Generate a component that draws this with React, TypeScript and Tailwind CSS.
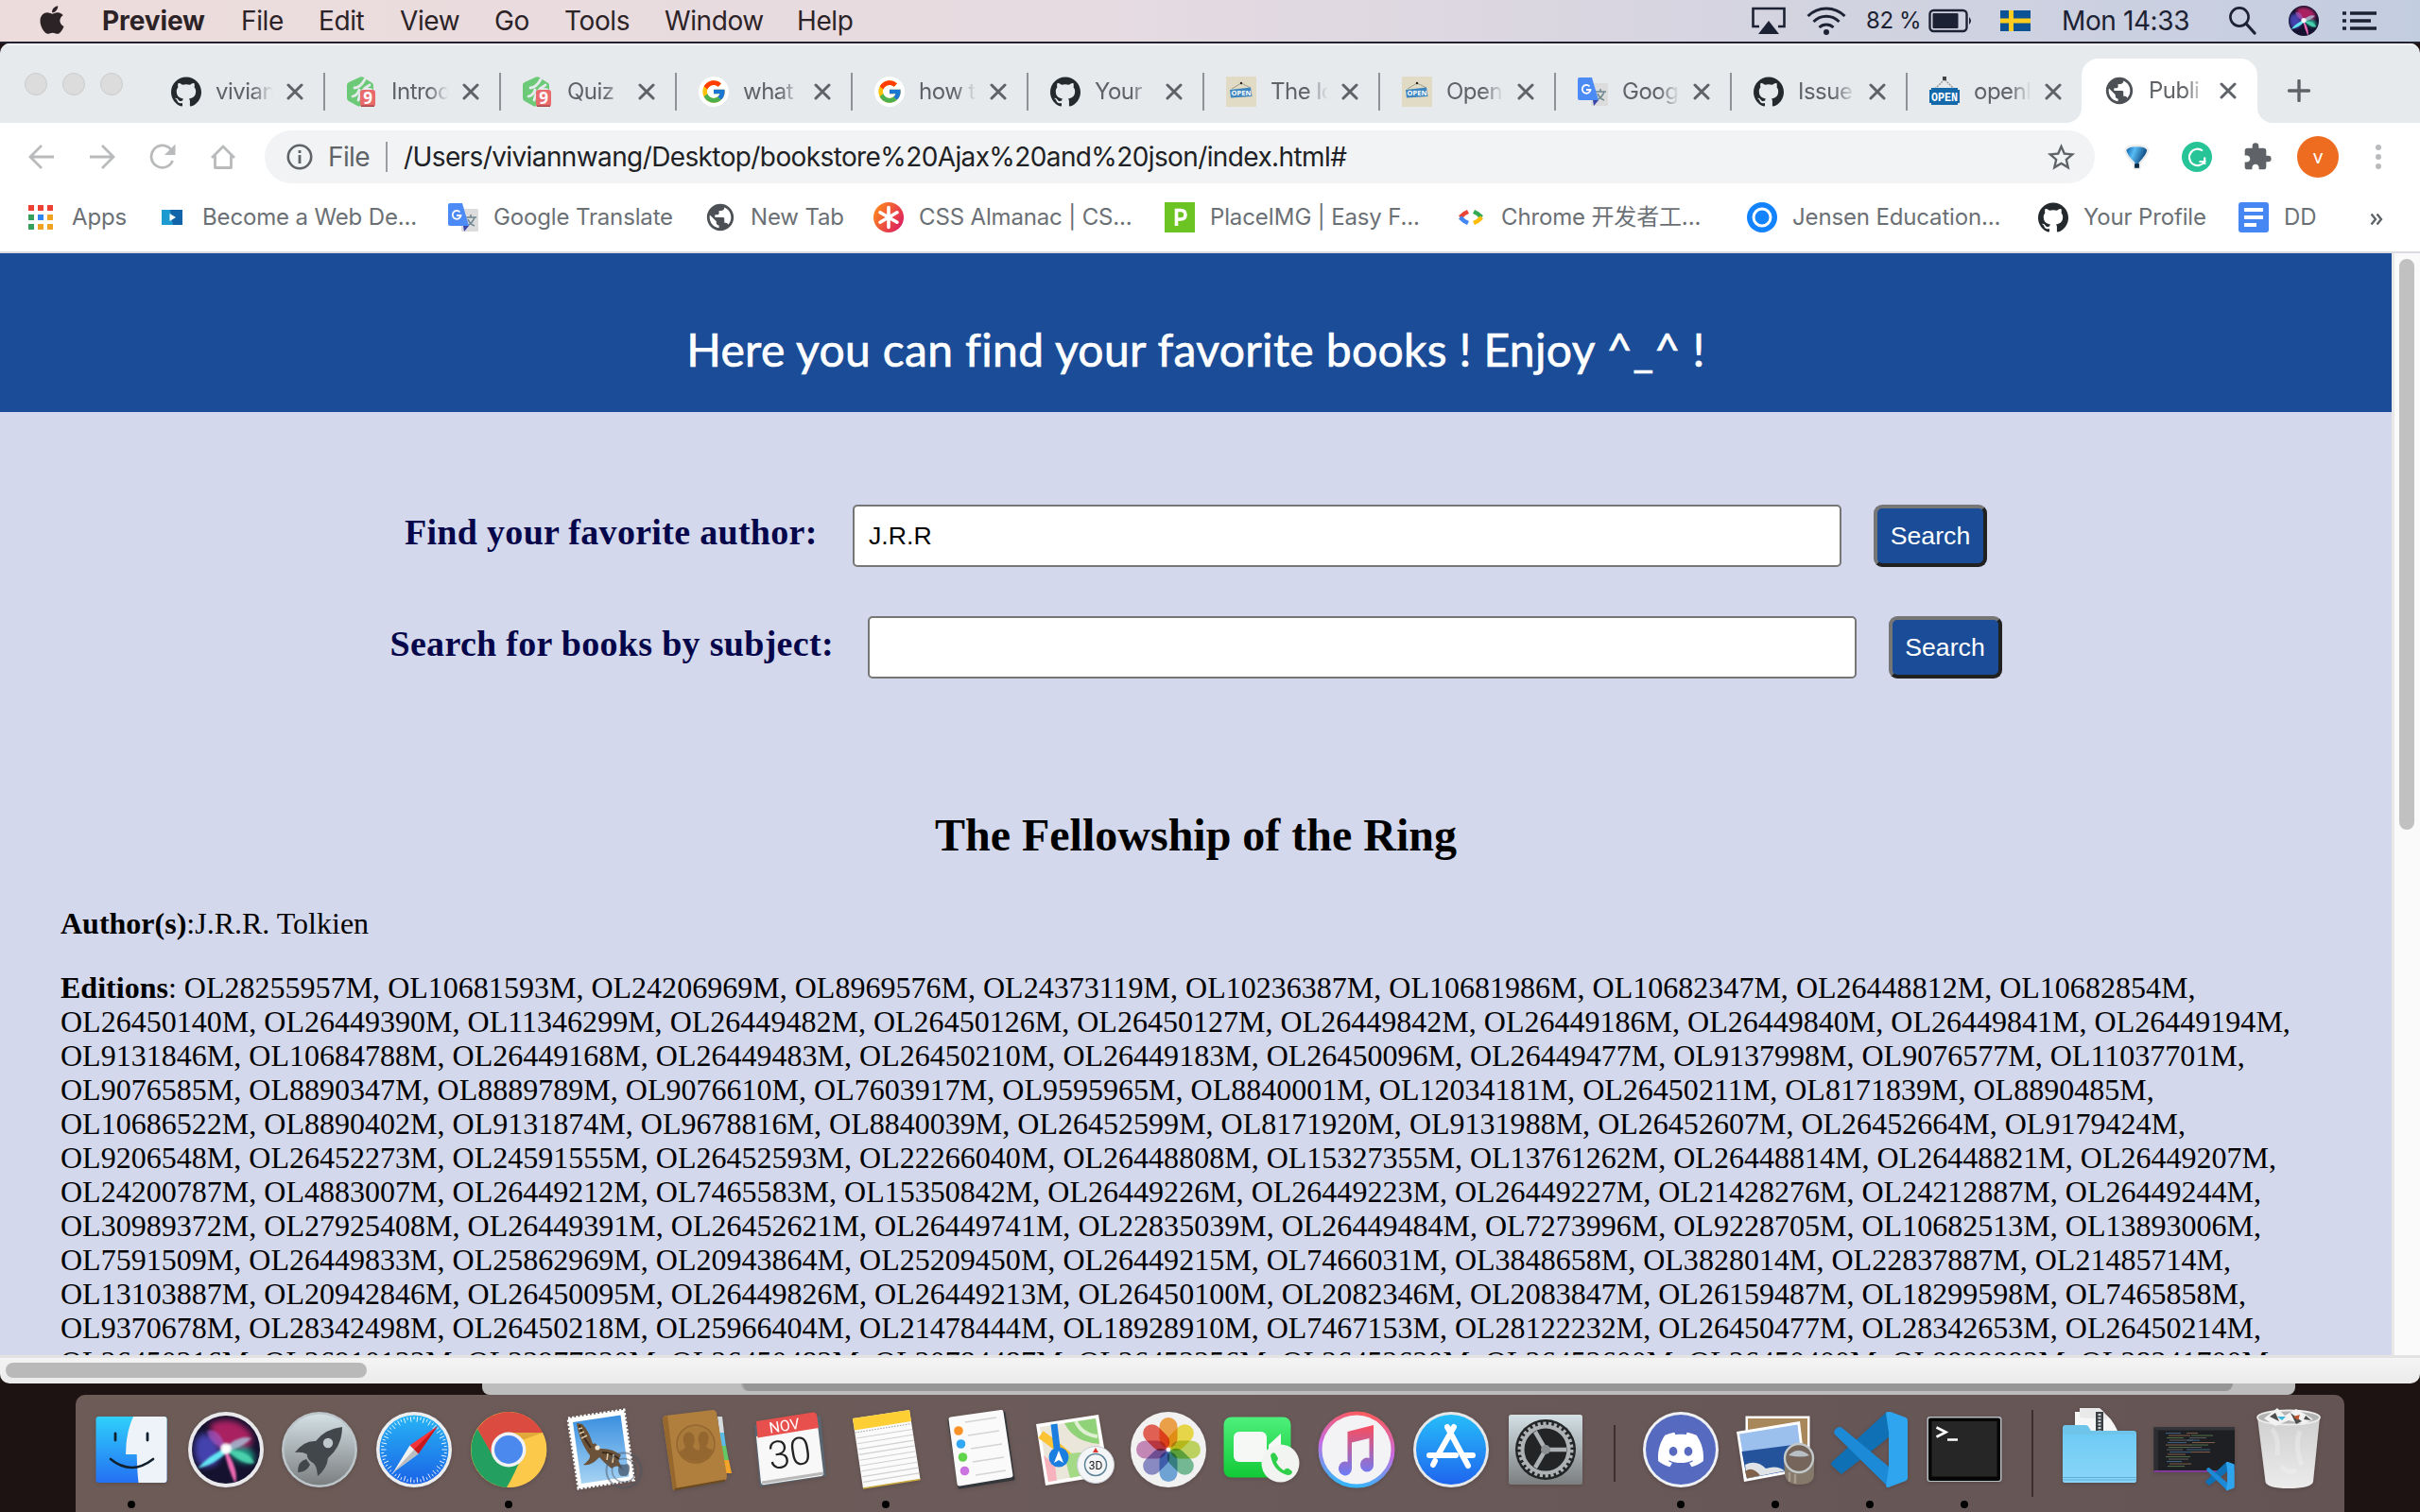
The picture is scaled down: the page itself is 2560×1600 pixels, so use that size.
import type { ReactNode } from "react";
import { FaApple } from "react-icons/fa";
import { FcGoogle } from "react-icons/fc";
import { MdExtension, MdPublic, MdStarBorder } from "react-icons/md";
import { SiDiscord, SiGithub } from "react-icons/si";

/* ---------- small favicons ---------- */

const Github = () => <SiGithub className="size-8 text-[#24292e]" />;

const Treehouse = () => (
  <svg viewBox="0 0 32 32" className="size-8">
    <path d="M14 0.5 Q17-0.5 19 2 L27 7 Q28 8 28 10 V22 Q28 24 26 25 L15 31 Q13 32 11 31 L2 26 Q0 25 0 23 V9 Q0 7 2 6 Z" fill="#6bc977" />
    <path d="M8 12 Q14 12 19 3 M6 21 Q11 20 13 14 M12 25 Q14 14 24 9 M17 16 Q21 12 26 14" stroke="#e6eaed" strokeWidth="2.8" fill="none" strokeLinecap="round" />
    <rect x="14" y="14" width="16" height="18" rx="3" fill="#e86a6c" />
    <rect x="15" y="30.5" width="14" height="1.5" fill="#a8484a" />
    <text x="22" y="29" fontSize="17" fontWeight="700" fill="#fff" textAnchor="middle" fontFamily="Open Sans, sans-serif">9</text>
  </svg>
);

const GoogleIcon = () => (
  <span className="flex size-8 items-center justify-center rounded-full bg-white">
    <FcGoogle className="size-[28px]" />
  </span>
);

const OpenBeige = () => (
  <svg viewBox="0 0 32 32" className="size-8">
    <rect width="32" height="32" fill="#e1dac4" />
    <path d="M6 13 L16 7 L26 12" stroke="#8f8c80" strokeWidth="0.8" fill="none" />
    <circle cx="16" cy="7" r="1.2" fill="#222" />
    <path d="M4 14 L26 11.5 L27.5 21 L5 22.5 Z" fill="#3f86bf" />
    <text x="16" y="20.3" fontSize="7.5" fontWeight="700" fill="#fff" textAnchor="middle" fontFamily="Open Sans, sans-serif">OPEN</text>
  </svg>
);

const OpenSign = () => (
  <svg viewBox="0 0 32 32" className="size-8">
    <path d="M6 13 L16 3 L26 13" stroke="#9b9b9b" strokeWidth="1.6" fill="none" strokeDasharray="2 1" />
    <rect x="14" y="0" width="4" height="4" fill="#444" />
    <path d="M0 14 h2 v-2 h28 v2 h2 v14 h-2 v2 h-28 v-2 h-2 Z" fill="#1469ab" />
    <text x="16" y="26" fontSize="13" fontWeight="700" fill="#fff" textAnchor="middle" textLength="28" lengthAdjust="spacingAndGlyphs" fontFamily="Liberation Mono, monospace">OPEN</text>
  </svg>
);

const Translate = () => (
  <svg viewBox="0 0 32 32" className="size-8">
    <rect x="14" y="7" width="18" height="24" rx="1.5" fill="#dcdcdc" />
    <path d="M18 16 h12 M24 13 v3 M20 25 Q26 22 28 16 M21 18 Q23 23 28 25" stroke="#6f8790" strokeWidth="1.6" fill="none" />
    <path d="M16 25 h6 l-5 6 Z" fill="#3746a8" />
    <path d="M2 1 h13 l7 24 H2 q-2 0-2-2 V3 q0-2 2-2 Z" fill="#4c8bf5" />
    <path d="M12.5 10.5 a4.4 4.4 0 1 0 1 3.5 h-4.5" stroke="#fff" strokeWidth="1.8" fill="none" />
  </svg>
);

const Globe = () => (
  <span className="flex size-8 items-center justify-center">
    <MdPublic className="size-[34px] shrink-0 text-[#4d5156]" />
  </span>
);

/* ---------- tabs ---------- */

const TABS: { title: string; icon: ReactNode }[] = [
  { title: "vivian", icon: <Github /> },
  { title: "Introd", icon: <Treehouse /> },
  { title: "Quiz", icon: <Treehouse /> },
  { title: "what", icon: <GoogleIcon /> },
  { title: "how t", icon: <GoogleIcon /> },
  { title: "Your", icon: <Github /> },
  { title: "The lo", icon: <OpenBeige /> },
  { title: "Open", icon: <OpenBeige /> },
  { title: "Goog", icon: <Translate /> },
  { title: "Issue", icon: <Github /> },
  { title: "openl", icon: <OpenSign /> },
];

const CloseX = () => (
  <svg viewBox="0 0 18 18" className="size-[18px] shrink-0">
    <path d="M2 2 L16 16 M16 2 L2 16" stroke="#5f6368" strokeWidth="3" strokeLinecap="round" />
  </svg>
);

const TabBody = ({ title, icon }: { title: string; icon: ReactNode }) => (
  <>
    <span className="shrink-0">{icon}</span>
    <span className="ml-[15px] w-[62px] overflow-hidden text-[24px] leading-8 tracking-[-0.5px] whitespace-nowrap text-[#5f6368] [mask-image:linear-gradient(to_right,black_62%,transparent_98%)]">
      {title}
    </span>
    <span className="ml-[13px] flex">
      <CloseX />
    </span>
  </>
);

const TabStrip = () => (
  <div className="flex h-[84px] border-t-2 border-[#f4f6f7] bg-[#e6eaed]">
    <div className="mt-[29px] ml-[26px] flex w-[132px] gap-4">
      {[0, 1, 2].map((i) => (
        <span key={i} className="size-6 rounded-full border border-[#cbcbcb] bg-[#dcdcdc]" />
      ))}
    </div>
    {TABS.map((t, i) => (
      <div key={i} className="mt-[29px] flex h-10 w-[186px] items-center">
        <div className={`flex h-full w-full items-center pl-[23px] ${i < 10 ? "border-r-2 border-[#8f9397]" : ""}`}>
          <TabBody {...t} />
        </div>
      </div>
    ))}
    <div className="relative -ml-[2px] mt-[14px] flex h-[68px] w-[186px] items-center rounded-t-[18px] bg-white pl-[24px]">
      <svg viewBox="0 0 16 16" className="absolute bottom-0 -left-4 size-4">
        <path d="M16 0 A16 16 0 0 1 0 16 H16 Z" fill="#fff" />
      </svg>
      <TabBody title="Publi" icon={<Globe />} />
      <svg viewBox="0 0 16 16" className="absolute -right-4 bottom-0 size-4">
        <path d="M0 0 A16 16 0 0 0 16 16 H0 Z" fill="#fff" />
      </svg>
    </div>
    <svg viewBox="0 0 24 24" className="mt-[36px] ml-[32px] size-6">
      <path d="M12 1.5 V22.5 M1.5 12 H22.5" stroke="#5f6368" strokeWidth="3.4" strokeLinecap="round" />
    </svg>
  </div>
);

/* ---------- menu bar ---------- */

const MENUS: [string, string][] = [
  ["File", "w-[82px]"],
  ["Edit", "w-[86px]"],
  ["View", "w-[100px]"],
  ["Go", "w-[74px]"],
  ["Tools", "w-[106px]"],
  ["Window", "w-[140px]"],
  ["Help", "w-[80px]"],
];

const SiriArt = () => (
  <>
    <defs>
      <clipPath id="orb">
        <circle cx="50" cy="44" r="36" />
      </clipPath>
    </defs>
    <circle cx="50" cy="44" r="36" fill="#15122f" />
    <g clipPath="url(#orb)">
      <g className="blur-[3px]">
        <path d="M34 16 Q60 6 76 26 Q82 40 70 42 L50 44 Q32 34 34 16" fill="#c4246a" opacity="0.85" />
        <path d="M18 34 Q30 16 44 44 Q46 64 24 62 Q14 52 18 34" fill="#4c4bc4" opacity="0.85" />
        <path d="M50 44 Q80 34 80 56 Q66 64 50 44" fill="#1f9d86" />
      </g>
      <g className="blur-[1px]">
        <path d="M50 44 Q74 44 80 58 Q70 62 50 44" fill="#4fd6b0" opacity="0.9" />
        <path d="M48 44 Q52 64 60 80 Q64 66 50 44" fill="#f06ab4" />
        <path d="M50 42 Q32 50 20 64 Q38 60 52 46" fill="#62e6f2" />
        <path d="M50 44 Q44 20 30 24 Q32 38 50 44" fill="#a65fd0" opacity="0.6" />
        <path d="M49 42 Q64 28 77 32 Q68 42 50 46" fill="#a9d8ea" opacity="0.7" />
        <circle cx="50" cy="43" r="6" fill="#fff" opacity="0.9" />
      </g>
    </g>
    <circle cx="50" cy="43" r="3" fill="#fff" />
  </>
);

const MenuBar = () => (
  <div className="flex h-[44px] items-center bg-linear-to-r from-[#ecdcdc] from-5% via-[#e6dbe1] via-45% to-[#c3cde0] text-[28px] tracking-[-0.4px] text-[#2c2327]">
    <FaApple className="mb-[3px] ml-[38px] size-[34px]" />
    <span className="ml-[36px] w-[147px] font-bold tracking-[-0.1px]">Preview</span>
    {MENUS.map(([m, w]) => (
      <span key={m} className={w}>
        {m}
      </span>
    ))}
    <div className="ml-auto flex items-center text-[#1c2233]">
      <svg viewBox="0 0 38 32" className="h-8 w-[38px]">
        <path d="M9 22 H2.5 V3 H35.5 V22 H29" stroke="#1c2233" strokeWidth="2.6" fill="none" />
        <path d="M19 16 L30 30 H8 Z" fill="#1c2233" />
      </svg>
      <svg viewBox="0 0 42 32" className="ml-[21px] h-8 w-[42px]">
        <path d="M1.5 11 A27.5 27.5 0 0 1 40.5 11 M7.5 17 A19 19 0 0 1 34.5 17 M13.5 23 A11 11 0 0 1 28.5 23" stroke="#1c2233" strokeWidth="3" fill="none" />
        <circle cx="21" cy="28" r="3" fill="#1c2233" />
      </svg>
      <span className="ml-[21px] w-[66px] text-[24px] tracking-[-0.4px] whitespace-nowrap">82 %</span>
      <svg viewBox="0 0 48 26" className="h-[26px] w-12">
        <rect x="1.5" y="2" width="39" height="22" rx="4" stroke="#1c2233" strokeWidth="2.4" fill="none" />
        <rect x="4.5" y="5" width="27" height="16" rx="1" fill="#1c2233" />
        <path d="M43 9 Q47 13 43 17 Z" fill="#1c2233" />
      </svg>
      <svg viewBox="0 0 32 22" className="ml-[28px] h-[22px] w-8">
        <rect width="32" height="22" fill="#0b5394" />
        <path d="M11.5 0 V22 M0 11 H32" stroke="#ffcd1f" strokeWidth="5" />
      </svg>
      <span className="ml-[33px] w-[176px] whitespace-nowrap">Mon 14:33</span>
      <svg viewBox="0 0 30 30" className="size-[30px]">
        <circle cx="12" cy="11" r="9.6" stroke="#1c2233" strokeWidth="2.6" fill="none" />
        <path d="M19 18 L28 28" stroke="#1c2233" strokeWidth="3.2" strokeLinecap="round" />
      </svg>
      <svg viewBox="14 8 72 72" className="ml-[34px] size-8">
        <SiriArt />
      </svg>
      <svg viewBox="0 0 38 22" className="mr-[45px] ml-[24px] h-[22px] w-[38px]">
        <path d="M1 3 H5 M1 11 H5 M1 19 H5 M9 3 H37 M9 11 H31 M9 19 H37" stroke="#1c2233" strokeWidth="3.6" />
      </svg>
    </div>
  </div>
);

/* ---------- toolbar ---------- */

const Toolbar = () => (
  <div className="flex h-[72px] items-center bg-white">
    <svg viewBox="0 0 28 28" className="ml-[30px] size-7">
      <path d="M27 14 H3 M14 2 L2 14 L14 26" stroke="#b9babc" strokeWidth="2.8" fill="none" />
    </svg>
    <svg viewBox="0 0 28 28" className="ml-[36px] size-7">
      <path d="M1 14 H25 M14 2 L26 14 L14 26" stroke="#b9babc" strokeWidth="2.8" fill="none" />
    </svg>
    <svg viewBox="0 0 28 28" className="ml-[36px] size-7">
      <path d="M22.6 6 A11.7 11.7 0 1 0 24.6 18" stroke="#b9babc" strokeWidth="2.8" fill="none" />
      <path d="M27.5 0.5 V12 H16 Z" fill="#b9babc" />
    </svg>
    <svg viewBox="0 0 28 28" className="ml-[36px] size-7">
      <path d="M2 15 L14 3 L26 15 M5.5 12 V25.5 H22.5 V12" stroke="#b9babc" strokeWidth="2.8" fill="none" strokeLinejoin="round" />
    </svg>
    <div className="ml-[30px] flex h-[56px] w-[1936px] items-center rounded-full bg-[#f1f3f4]">
      <svg viewBox="0 0 28 28" className="ml-[23px] size-7">
        <circle cx="14" cy="14" r="12.2" stroke="#5f6368" strokeWidth="2.6" fill="none" />
        <path d="M14 12 V21 M14 7 V10" stroke="#5f6368" strokeWidth="2.8" />
      </svg>
      <span className="ml-[16px] w-[61px] text-[28px] tracking-[-0.6px] text-[#5f6368]">File</span>
      <span className="h-8 w-[2px] bg-[#9a9da1]" />
      <span className="ml-[17px] text-[28px] tracking-[-0.61px] whitespace-nowrap text-[#202124]">
        /Users/viviannwang/Desktop/bookstore%20Ajax%20and%20json/index.html#
      </span>
      <MdStarBorder className="mr-[18px] ml-auto size-[35px] text-[#5f6368]" />
    </div>
    <svg viewBox="0 0 30 32" className="ml-[29px] size-[31px]">
      <defs>
        <linearGradient id="balloon" x1="0" x2="1" y1="0" y2="0.4">
          <stop offset="0" stopColor="#0a5ca6" />
          <stop offset="0.4" stopColor="#58bdf5" />
          <stop offset="1" stopColor="#053a72" />
        </linearGradient>
      </defs>
      <path d="M3.500 8 Q6 4.500 15 4.500 Q24 4.500 26 8 Q26 12 17 22 V27 H13 V22 Q4 13 3.500 8" fill="#fff" stroke="#ececec" strokeWidth="5" strokeLinejoin="round" />
      <path d="M3.500 8 Q6 4.500 15 4.500 Q24 4.500 26 8 Q26 12 17 22 V27 H13 V22 Q4 13 3.500 8" fill="url(#balloon)" />
      <path d="M12.500 23 h5 v4.500 h-5 Z" fill="#0c2945" />
    </svg>
    <svg viewBox="0 0 32 32" className="ml-[32px] size-8">
      <circle cx="16" cy="16" r="16" fill="#27c498" />
      <path d="M22 9.5 A8.7 8.7 0 1 0 24 21 H18.5 M24.2 16.5 V24" stroke="#fff" strokeWidth="2.2" fill="none" />
    </svg>
    <MdExtension className="ml-[32px] size-[32px] text-[#5f6368]" />
    <span className="ml-[26px] flex size-[44px] items-center justify-center rounded-full bg-[#ee6c1f] text-[20px] text-white">v</span>
    <span className="ml-[39px] flex flex-col gap-1">
      {[0, 1, 2].map((i) => (
        <span key={i} className="size-[6px] rounded-full bg-[#b9babc]" />
      ))}
    </span>
  </div>
);

/* ---------- bookmarks ---------- */

const APP_DOTS = ["#ee3f35", "#ee3f35", "#ee3f35", "#34a05a", "#2f86f0", "#f0a323", "#34a05a", "#f0a323", "#f0a323"];

const BOOKMARKS: { label: string; cell: string; icon: ReactNode }[] = [
  {
    label: "Apps",
    cell: "w-[138px]",
    icon: (
      <svg viewBox="0 0 32 32" className="size-8">
        {APP_DOTS.map((c, i) => (
          <rect key={i} x={2 + (i % 3) * 10} y={3 + Math.floor(i / 3) * 10} width="6" height="6" fill={c} />
        ))}
      </svg>
    ),
  },
  {
    label: "Become a Web De...",
    cell: "w-[308px]",
    icon: (
      <svg viewBox="0 0 32 32" className="size-8">
        <rect x="5" y="8" width="22" height="16" fill="#1d9ad0" />
        <path d="M14 8 H27 V24 H17 Z" fill="#1263a8" />
        <path d="M13.5 12 L20 16 L13.5 20 Z" fill="#fff" />
      </svg>
    ),
  },
  { label: "Google Translate", cell: "w-[272px]", icon: <Translate /> },
  { label: "New Tab", cell: "w-[178px]", icon: <Globe /> },
  {
    label: "CSS Almanac | CS...",
    cell: "w-[308px]",
    icon: (
      <svg viewBox="0 0 32 32" className="size-8">
        <defs>
          <linearGradient id="csst" x1="0" x2="1" y1="0.2" y2="0.8">
            <stop offset="0" stopColor="#ff8a1c" />
            <stop offset="1" stopColor="#da1b63" />
          </linearGradient>
        </defs>
        <circle cx="16" cy="16" r="16" fill="url(#csst)" />
        <path d="M16 5.5 V26.5 M7 10.8 L25 21.2 M25 10.8 L7 21.2" stroke="#fff" strokeWidth="3.6" strokeLinecap="round" />
      </svg>
    ),
  },
  {
    label: "PlaceIMG | Easy F...",
    cell: "w-[308px]",
    icon: (
      <svg viewBox="0 0 32 32" className="size-8">
        <rect width="32" height="32" fill="#6cc424" />
        <path d="M12.5 25 V8.5 H17 Q22 8.5 22 13.3 Q22 18 17 18 H12.5" stroke="#fff" strokeWidth="3.6" fill="none" />
      </svg>
    ),
  },
  {
    label: "Chrome 开发者工...",
    cell: "w-[308px]",
    icon: (
      <svg viewBox="0 0 32 32" className="size-8" strokeWidth="4.4" fill="none">
        <path d="M13 10 L9 12 L4.5 16" stroke="#ea4335" />
        <path d="M4.5 16 L9 20 L13 22" stroke="#4285f4" />
        <path d="M19 10 L23 12 L27.5 16" stroke="#34a853" />
        <path d="M27.5 16 L23 20 L19 22" stroke="#fbbc05" />
      </svg>
    ),
  },
  {
    label: "Jensen Education...",
    cell: "w-[308px]",
    icon: (
      <svg viewBox="0 0 32 32" className="size-8">
        <circle cx="16" cy="16" r="16" fill="#1483ff" />
        <circle cx="16" cy="16" r="9" stroke="#fff" strokeWidth="3" fill="none" />
      </svg>
    ),
  },
  { label: "Your Profile", cell: "w-[212px]", icon: <Github /> },
  {
    label: "DD",
    cell: "w-[129px]",
    icon: (
      <svg viewBox="0 0 32 32" className="size-8">
        <rect width="32" height="32" rx="3" fill="#4787f3" />
        <path d="M6 8 H26 M6 16 H26 M6 24 H19" stroke="#fff" strokeWidth="4" />
      </svg>
    ),
  },
];

const Bookmarks = () => (
  <div className="flex h-[66px] items-center border-b-2 border-[#d9dbe0] bg-white pb-2 pl-[28px]">
    {BOOKMARKS.map((b) => (
      <div key={b.label} className={`flex shrink-0 items-center gap-4 ${b.cell}`}>
        {b.icon}
        <span className="font-[Inter,'Noto_Sans_CJK_SC',sans-serif] text-[24px] leading-8 tracking-[-0.15px] whitespace-nowrap text-[#6b7075]">{b.label}</span>
      </div>
    ))}
    <svg viewBox="0 0 14 14" className="mt-1 ml-[10px] size-[14px]">
      <path d="M1.5 1.5 L6 7 L1.5 12.5 M7.5 1.5 L12 7 L7.5 12.5" stroke="#5f6368" strokeWidth="2.4" fill="none" />
    </svg>
  </div>
);

/* ---------- web page ---------- */

const EDITIONS = [
  "OL28255957M, OL10681593M, OL24206969M, OL8969576M, OL24373119M, OL10236387M, OL10681986M, OL10682347M, OL26448812M, OL10682854M,",
  "OL26450140M, OL26449390M, OL11346299M, OL26449482M, OL26450126M, OL26450127M, OL26449842M, OL26449186M, OL26449840M, OL26449841M, OL26449194M,",
  "OL9131846M, OL10684788M, OL26449168M, OL26449483M, OL26450210M, OL26449183M, OL26450096M, OL26449477M, OL9137998M, OL9076577M, OL11037701M,",
  "OL9076585M, OL8890347M, OL8889789M, OL9076610M, OL7603917M, OL9595965M, OL8840001M, OL12034181M, OL26450211M, OL8171839M, OL8890485M,",
  "OL10686522M, OL8890402M, OL9131874M, OL9678816M, OL8840039M, OL26452599M, OL8171920M, OL9131988M, OL26452607M, OL26452664M, OL9179424M,",
  "OL9206548M, OL26452273M, OL24591555M, OL26452593M, OL22266040M, OL26448808M, OL15327355M, OL13761262M, OL26448814M, OL26448821M, OL26449207M,",
  "OL24200787M, OL4883007M, OL26449212M, OL7465583M, OL15350842M, OL26449226M, OL26449223M, OL26449227M, OL21428276M, OL24212887M, OL26449244M,",
  "OL30989372M, OL27925408M, OL26449391M, OL26452621M, OL26449741M, OL22835039M, OL26449484M, OL7273996M, OL9228705M, OL10682513M, OL13893006M,",
  "OL7591509M, OL26449833M, OL25862969M, OL20943864M, OL25209450M, OL26449215M, OL7466031M, OL3848658M, OL3828014M, OL22837887M, OL21485714M,",
  "OL13103887M, OL20942846M, OL26450095M, OL26449826M, OL26449213M, OL26450100M, OL2082346M, OL2083847M, OL26159487M, OL18299598M, OL7465858M,",
  "OL9370678M, OL28342498M, OL26450218M, OL25966404M, OL21478444M, OL18928910M, OL7467153M, OL28122232M, OL26450477M, OL28342653M, OL26450214M,",
  "OL26450216M, OL26910122M, OL23977320M, OL26450482M, OL20784487M, OL26452256M, OL26452620M, OL26452600M, OL26450400M, OL9999992M, OL28341700M,",
];

const SearchRow = ({ label, cell, value, top }: { label: string; cell: string; value: string; top: string }) => (
  <div className={`flex h-[66px] justify-center ${top}`}>
    <label className={`pr-[38px] text-right font-[Liberation_Serif,serif] text-[38px] leading-[59px] font-bold tracking-[0.3px] whitespace-nowrap text-[#06064a] ${cell}`}>
      {label}
    </label>
    <input
      readOnly
      value={value}
      className="h-[66px] w-[1046px] rounded-[5px] border-2 border-[#767676] bg-white px-[15px] font-[Liberation_Sans,Arial,sans-serif] text-[26.67px] text-black"
    />
    <button className="ml-[34px] h-[66px] w-[120px] rounded-[9px] border-4 border-t-[#767676] border-r-[#212121] border-b-[#212121] border-l-[#767676] bg-[#1a4c97] font-[Liberation_Sans,Arial,sans-serif] text-[26.67px] text-white">
      Search
    </button>
  </div>
);

const WebPage = () => (
  <div className="flex h-[1166px]">
    <div className="h-full w-[2530px] overflow-hidden bg-[#d4d8ec] text-black">
      <header className="flex h-[168px] justify-center bg-[#1a4c97] pt-[72px]">
        <h1 className="font-[Lato,sans-serif] text-[48px] leading-[60px] tracking-[0.35px] whitespace-nowrap text-white [-webkit-text-stroke:0.7px_white]">
          Here you can find your favorite books ! Enjoy ^_^ !
        </h1>
      </header>
      <SearchRow label="Find your favorite author:" cell="w-[474px]" value="J.R.R" top="mt-[98px]" />
      <SearchRow label="Search for books by subject:" cell="w-[505px]" value="" top="mt-[52px]" />
      <div className="font-[Liberation_Serif,serif]">
        <h2 className="mt-[138px] text-center text-[48px] leading-[56px] font-bold">The Fellowship of the Ring</h2>
        <p className="mt-[47px] ml-16 text-[32px] leading-9">
          <b>Author(s)</b>:J.R.R. Tolkien
        </p>
        <div className="mt-8 ml-16 text-[32px] leading-9 tracking-[0.013px] whitespace-nowrap">
          {EDITIONS.map((line, i) => (
            <p key={i}>
              {i === 0 && (
                <>
                  <b>Editions</b>:{" "}
                </>
              )}
              {line}
            </p>
          ))}
        </div>
      </div>
    </div>
    <div className="flex-1 border-l-[3px] border-[#e8e8e8] bg-[#fafafa] pt-[6px] pl-[5px]">
      <div className="h-[604px] w-4 rounded-full bg-[#c1c1c1]" />
    </div>
  </div>
);

/* ---------- dock ---------- */

const VSCodeArt = () => (
  <>
    <path d="M68 4 L90 12 L64 36 L20 70 L10 61 Q8 59 10 57 Z" fill="#1070b5" />
    <path d="M13 28 Q11 25 14 22 Q18 18 22 22 L70 62 V84 Z" fill="#1c8ad6" />
    <path d="M70 4 Q68 4 67 5 L70 26 V62 L67 83 Q69 85 72 83 L88 77 Q90 76 90 74 V13 Q90 11 88 10 L72 4 Z" fill="#2ea5ee" />
  </>
);

const polar = (r: number, deg: number) => {
  const a = (deg * Math.PI) / 180;
  return [50 + r * Math.cos(a), 44 + r * Math.sin(a)];
};

const PETALS = ["#f79a2e", "#f2dc2e", "#bfd94a", "#63b98a", "#5b9fdc", "#7d7fc4", "#c77bb6", "#ec4a3c"];

type DockItem = { name: string; running?: boolean; art: ReactNode };

const APPS: DockItem[] = [
  {
    name: "Finder",
    running: true,
    art: (
      <>
        <rect x="12.500" y="9" width="75" height="70" rx="3" fill="url(#finder)" />
        <path d="M52 9 H84.500 Q87.500 9 87.500 12 V76 Q87.500 79 84.500 79 H57.500 Q56 66 55.700 49 H44 Q44 26 52 9" fill="#eef2f9" />
        <path d="M33 27 V34 M67 27 V34" stroke="#10202e" strokeWidth="2.8" strokeLinecap="round" />
        <path d="M28 54 Q50 72 73 54" stroke="#10202e" strokeWidth="2.600" fill="none" strokeLinecap="round" />
      </>
    ),
  },
  {
    name: "Siri",
    art: (
      <>
        <circle cx="50" cy="44" r="40" fill="#e9e9ec" />
        <SiriArt />
      </>
    ),
  },
  {
    name: "Launchpad",
    art: (
      <>
        <circle cx="50" cy="44" r="40" fill="#bcc6ca" />
        <circle cx="50" cy="44" r="37.500" fill="url(#silver)" />
        <path d="M74 20 Q56 22 46 35 Q34 34 24 47 Q32 46 37 49 Q36 54 43 58 Q47 60 48 72 Q58 64 59 53 Q74 40 74 20" fill="#42474b" />
        <path d="M36 54 Q27 56 27 68 Q36 68 40 60 Z" fill="#42474b" />
        <circle cx="59" cy="37" r="5.200" fill="#bfc9cd" />
      </>
    ),
  },
  {
    name: "Safari",
    art: (
      <>
        <circle cx="50" cy="44" r="40" fill="#eceef0" />
        <circle cx="50" cy="44" r="36.500" fill="url(#safari)" />
        {Array.from({ length: 60 }, (_, i) => {
          const [x1, y1] = polar(i % 2 ? 32 : 29.5, i * 6);
          const [x2, y2] = polar(35, i * 6);
          return <line key={i} x1={x1} y1={y1} x2={x2} y2={y2} stroke="#fff" strokeWidth="0.900" />;
        })}
        <path d="M75 19 L54.500 48.500 L45.500 39.500 Z" fill="#f2343a" />
        <path d="M28 68 L54.500 48.500 L45.500 39.500 Z" fill="#f2f2f2" />
        <path d="M75 19 L54.500 48.500 L50 44 Z" fill="#c8161d" />
        <path d="M28 68 L54.500 48.500 L50 44 Z" fill="#b9bdc0" />
      </>
    ),
  },
  {
    name: "Chrome",
    running: true,
    art: (
      <>
        <circle cx="50" cy="44" r="40" fill="#fdc94a" />
        <path d="M17 22 A40 40 0 0 1 86 26 H50 L33 52 Z" fill="#dc4b40" />
        <path d="M17 22 L34.500 53 L50 62 L62 56 L49 84 A40 40 0 0 1 17 22" fill="#23a060" />
        <path d="M86 26 A40 40 0 0 1 48 84 L65.500 53 L60 30 Z" fill="#fdc94a" />
        <path d="M50 26 H86 L64 34 Z" fill="#e0a93a" />
        <circle cx="50" cy="44" r="18.500" fill="#f2f2f2" />
        <circle cx="50" cy="44" r="15" fill="#4b89ee" />
      </>
    ),
  },
  {
    name: "Mail",
    art: (
      <>
        <path d="M14 11 L73 2 L83.500 76 L25 85 Z" fill="#fff" stroke="#fff" strokeWidth="3" strokeDasharray="2.400 1.800" />
        <path d="M19 15 L69.500 7.500 L78.500 72.500 L28 80 Z" fill="url(#sky)" />
        <path d="M23 16 L29 17 Q36 24 40 38 Q43 36 45 40 L48 43 Q60 42 70 50 L67 55 L72 66 Q66 58 60 64 Q52 58 47 52 Q38 62 30 60 Q38 54 37 50 Q26 36 23 16" fill="#6b5238" />
        <path d="M26 18 Q30 32 38 42 M50 47 Q60 47 68 54" stroke="#3b2a1c" strokeWidth="2" fill="none" />
        <path d="M25 22 L29 21 M26 27 L31 25 M28 32 L34 29 M56 48 L55 55 M62 49 L61 58" stroke="#d9c7a6" strokeWidth="1.600" fill="none" />
        <circle cx="45" cy="42" r="2.600" fill="#efe6d4" />
        <circle cx="73" cy="66" r="18.500" stroke="#4a5666" strokeWidth="2" fill="none" opacity="0.500" />
        <circle cx="73" cy="66" r="12.500" stroke="#4a5666" strokeWidth="1.500" fill="none" opacity="0.500" />
        <path d="M73 60 Q80 57 79 65 Q78 73 73 72 Q67 73 67 65 Q67 58 73 60" fill="#3f4d60" opacity="0.700" />
      </>
    ),
  },
  {
    name: "Contacts",
    art: (
      <>
        <path d="M72 9 L77 9 L79 26 H74 Z" fill="#d5dadd" />
        <path d="M74 26 L79 26 L81 41 H75 Z" fill="#5bbce8" />
        <path d="M75 40 L81 40 L84 56 H76 Z" fill="#63c765" />
        <path d="M77 55 L84 55 L87 69 H79 Z" fill="#f3a429" />
        <path d="M14 12 Q14 9 17 8 L67 2 Q70 2 71 5 L82 72 Q82 76 79 77 L25 86.500 Z" fill="#b07f3e" />
        <path d="M14 12 Q14 9 19 8 L29 85.500 L25 86.500 Z" fill="#96682d" />
        <path d="M27 86 L80 76.500" stroke="#6d4a1d" strokeWidth="2" />
        <circle cx="49" cy="38" r="20" stroke="#93672f" strokeWidth="1.500" fill="#aa7a3a" />
        <path d="M31 46 Q37 44 38 41 Q34 34 37 28 Q42 22 47 29 Q49 35 46 40 Q46 43 52 45 Q54 42 53 39 Q50 33 53 27 Q58 22 62 28 Q64 35 60 40 Q61 43 67 44 Q63 56 50 57 Q37 57 31 46" fill="#93672f" />
      </>
    ),
  },
  {
    name: "Calendar",
    art: (
      <>
        <path d="M11 18 L17 83 L87 72 L81 8 Z" fill="#596570" />
        <path d="M13 30 L18 79 Q19 82 22 81 L82 72 Q85 71 84 68 L78 18 Z" fill="#f8f8f8" />
        <path d="M19 79 L84 69" stroke="#b9b9b9" strokeWidth="3" />
        <path d="M13 14 L73 4.500 Q76 4 77 7 L79 21 L14.500 31.500 Z" fill="#e8504d" />
        <g transform="rotate(-9 46 40)" textAnchor="middle" fontFamily="Roboto, sans-serif">
          <text x="46" y="24" fontSize="16" fill="#fff">NOV</text>
          <text x="47" y="62" fontSize="41" fontWeight="300" fill="#222">30</text>
        </g>
      </>
    ),
  },
  {
    name: "Notes",
    running: true,
    art: (
      <>
        <path d="M15 11 L75 2 L86.500 75.500 L26 85 Z" fill="#fbfbfb" />
        <path d="M26 85 L86.500 75.500" stroke="#c9a83c" strokeWidth="1.500" />
        <path d="M15 11 L75 2 L77 14 L17 23.500 Z" fill="#fdcf35" />
        <path d="M17.500 26 L77.500 16.500" stroke="#999" strokeWidth="1" strokeDasharray="1.500 1.500" />
        {Array.from({ length: 9 }, (_, i) => (
          <line key={i} x1={19 + i * 0.9} y1={32 + i * 5.8} x2={78 + i * 0.9} y2={22.5 + i * 5.8} stroke="#d0d0d0" strokeWidth="1.100" />
        ))}
      </>
    ),
  },
  {
    name: "Reminders",
    art: (
      <>
        <path d="M18 13 L29 84 L86 75 L76 5 Z" fill="#33363a" stroke="#33363a" strokeWidth="3" strokeLinejoin="round" />
        <path d="M20 12 L73 4.500 L83 71 L29 80 Z" fill="#fafafa" stroke="#fafafa" strokeWidth="5" strokeLinejoin="round" />
        <path d="M35 15 L68 10 M38 29 L71 24 M41 43 L74 38 M43 57 L76 52 M46 71 L78 66" stroke="#d4d4d4" strokeWidth="1.300" />
        <circle cx="28" cy="24" r="4.800" fill="#fb9228" />
        <circle cx="30.500" cy="38" r="4.800" fill="#31a8f5" />
        <circle cx="32.500" cy="52" r="4.800" fill="#62d44c" />
        <circle cx="34.500" cy="66.500" r="4.800" fill="#cb73e1" />
      </>
    ),
  },
  {
    name: "Maps",
    art: (
      <>
        <path d="M10 17 L76 7 L87 71 L20 82 Z" fill="#fdfdfd" />
        <path d="M14 20 L73 11 L82 67 L23 78 Z" fill="#ebe6da" />
        <path d="M40 16 L73 11 L77 38 Q50 36 40 16" fill="#8fd277" />
        <path d="M52 14 Q58 28 75 30" stroke="#dff0d2" strokeWidth="4" fill="none" />
        <path d="M15 28 Q35 42 52 58" stroke="#fcc334" strokeWidth="9" fill="none" />
        <path d="M18 50 L30 60 L32 76.500 L23 78 Z" fill="#f6b3bd" />
        <path d="M40 50 Q64 42 80 56 L82 67 L46 74 Z" fill="#a4d985" />
        <path d="M29 17 L33 50" stroke="#1c7fe0" strokeWidth="7" />
        <circle cx="34" cy="52" r="10.500" fill="#1c7fe0" />
        <path d="M34 45 L39 58 L34 55 L29 58 Z" fill="#fff" />
        <circle cx="73" cy="60" r="19.500" fill="#f3f5f7" stroke="#c7ccd1" />
        <circle cx="73" cy="60" r="11.500" stroke="#5a8096" strokeWidth="1.500" fill="none" />
        <path d="M73 42 L76 47 H70 Z" fill="#e0322b" />
        <text x="73" y="64.500" fontSize="12" textAnchor="middle" fill="#222" fontFamily="Roboto, sans-serif">3D</text>
      </>
    ),
  },
  {
    name: "Photos",
    art: (
      <>
        <circle cx="50" cy="44" r="40" fill="#f1f1f1" />
        {PETALS.map((c, i) => (
          <rect key={c} x="40.500" y="10" width="19" height="32" rx="9.500" fill={c} className="opacity-85 mix-blend-multiply" transform={`rotate(${i * 45} 50 44)`} />
        ))}
        <circle cx="50" cy="44" r="2" fill="#fff" />
      </>
    ),
  },
  {
    name: "FaceTime",
    art: (
      <>
        <rect x="9.500" y="9.500" width="71" height="64" rx="8" fill="url(#green)" />
        <rect x="20" y="25" width="35" height="32" rx="6" fill="#f6f8f6" />
        <path d="M57 39 L70 27 V56 L57 46 Z" fill="#f6f8f6" />
        <circle cx="69.500" cy="58.500" r="20" fill="#f1f4f1" />
        <path d="M59 50 Q61 46 64 48 L67 53 Q67 55 65 57 Q68 63 73 66 Q76 63 78 64 L82 67 Q82 71 77 71 Q62 67 59 50" fill="#2fcf4a" />
      </>
    ),
  },
  {
    name: "Music",
    art: (
      <>
        <circle cx="50" cy="44" r="38.500" fill="#f3f3f6" stroke="url(#ring)" strokeWidth="4" />
        <path d="M40.500 25 L68 18 V59 A7 7.500 0 1 1 63.500 53 V32 L45 36.500 V64 A7 7.500 0 1 1 40.500 57 Z" fill="url(#note)" />
      </>
    ),
  },
  {
    name: "App Store",
    art: (
      <>
        <circle cx="50" cy="44" r="40" fill="#e6e8ea" />
        <circle cx="50" cy="44" r="37" fill="url(#store)" />
        <path d="M53 20 L36 50 M46 20 L68 61 M27 50 H55 M62 50 H73 M33 56 L31 60" stroke="#fff" strokeWidth="6" strokeLinecap="round" />
      </>
    ),
  },
  {
    name: "System Preferences",
    art: (
      <>
        <rect x="11" y="7" width="78" height="74" rx="2.500" fill="url(#silver)" />
        <circle cx="50" cy="44" r="32" fill="#232425" />
        <circle cx="50" cy="44" r="24.500" stroke="#aeb1b3" strokeWidth="4" fill="none" />
        <circle cx="50" cy="44" r="27.500" stroke="#aeb1b3" strokeWidth="4" fill="none" strokeDasharray="3.200 2.560" />
        <path d="M50 44 L72 44 M50 44 L39 25 M50 44 L39 63" stroke="#aeb1b3" strokeWidth="4.500" />
        <circle cx="50" cy="44" r="5" fill="#8b8f92" />
      </>
    ),
  },
];

const RUNNING: DockItem[] = [
  {
    name: "Discord",
    running: true,
    art: (
      <>
        <circle cx="50" cy="44" r="40" fill="#f0f1f4" />
        <circle cx="50" cy="44" r="37" fill="#566bc0" />
        <SiDiscord x="26" y="20" size={48} color="#fff" />
      </>
    ),
  },
  {
    name: "Preview",
    running: true,
    art: (
      <>
        <path d="M18.500 8.500 H86.500 V66 H18.500 Z" fill="#fff" />
        <path d="M21 11 H84 V64 H21 Z" fill="#a8875a" />
        <path d="M9 25 L76 14 L82 66 L17 78 Z" fill="#fff" />
        <path d="M12 27.500 L73.500 17.500 L79 63.500 L20 74.500 Z" fill="#9cc0ee" />
        <path d="M14.500 46 L76.500 38 L79 63.500 L20 74.500 Z" fill="#24539c" />
        <path d="M18 60 Q30 54 40 64 Q52 60 60 66.500 L20 74.500 Z" fill="#dfe3e6" />
        <path d="M18 67 Q26 61 34 71.500 L20 74.500 Z" fill="#80614a" />
        <path d="M59 54 H91 V70 Q91 81 75 81 Q62 81 60 70 Z" fill="#85796b" />
        <path d="M65 68 V78 M71 70 V80" stroke="#a59a8b" strokeWidth="2.500" />
        <circle cx="75" cy="53" r="15" fill="#75655a" stroke="#c3c8cb" strokeWidth="2.400" />
        <path d="M64 50 Q74 40 86 50 Q78 53 64 50" fill="#b7bfc4" />
      </>
    ),
  },
  { name: "Code", running: true, art: <VSCodeArt /> },
  {
    name: "Terminal",
    running: true,
    art: (
      <>
        <rect x="10.500" y="9" width="79" height="69" rx="3" fill="#b5bcc0" />
        <rect x="12" y="10.500" width="76" height="66.500" rx="2" fill="#060606" />
        <rect x="15.500" y="14" width="69" height="58.500" fill="#262626" />
        <path d="M20.500 20.500 L30.500 25.500 L20.500 30.500 M32 33.500 H43" stroke="#fff" strokeWidth="2.600" fill="none" />
      </>
    ),
  },
];

const CODE_COLORS = ["#3d5f7d", "#7a5a46", "#4f6a45", "#5a5a5a"];

const STACKS: DockItem[] = [
  {
    name: "Documents",
    art: (
      <>
        <path d="M24 4 H52 Q62 8 70 26 H24 Z" fill="#f6f6f6" />
        <path d="M29 0 H50 Q58 6 58 12 L29 10 Z" fill="#e9e9e9" />
        <path d="M46 4 H54 V24 H46 Z" fill="#3a3f44" />
        <path d="M50 6 V24" stroke="#cfd3d6" strokeWidth="3" strokeDasharray="2 1.500" />
        <path d="M14 18 H35 Q38 18 39 21 L41 24 H86 Q89 24 89 27 V76 Q89 79 86 79 H14 Q11 79 11 76 V21 Q11 18 14 18" fill="#6fc4ea" />
        <path d="M11 28 H89 V76 Q89 79 86 79 H14 Q11 79 11 76 Z" fill="url(#folder)" />
        <path d="M11 73.500 H89 M11 76 H89" stroke="#5fb0d8" strokeWidth="1" />
      </>
    ),
  },
  {
    name: "Editor window",
    art: (
      <>
        <rect x="7.500" y="20.500" width="85.500" height="47" fill="#1e1f22" />
        <rect x="7.500" y="20.500" width="85.500" height="3" fill="#34353a" />
        <rect x="7.500" y="66" width="85.500" height="1.800" fill="#8a3ca8" />
        <rect x="8" y="24" width="4" height="42" fill="#2c2d31" />
        {Array.from({ length: 15 }, (_, i) => (
          <g key={i}>
            <rect x={20 + ((i * 3) % 5)} y={26 + i * 2.5} width={16 + ((i * 7) % 12)} height="1.100" fill={CODE_COLORS[i % 4]} />
            <rect x={42 + ((i * 5) % 7)} y={26 + i * 2.5} width={i < 9 ? 12 + ((i * 11) % 16) : 0} height="1.100" fill={CODE_COLORS[(i + 1) % 4]} />
          </g>
        ))}
        <g transform="translate(58.500 55.500) scale(0.38)">
          <VSCodeArt />
        </g>
      </>
    ),
  },
  {
    name: "Trash",
    art: (
      <>
        <path d="M17 10 H83 L76 78 Q74 85 50 85 Q27 85 25.500 78 Z" fill="url(#bin)" />
        <ellipse cx="50" cy="10" rx="33" ry="7.500" fill="#b3b3b3" stroke="#ededed" strokeWidth="1.800" />
        <path d="M24 11 L38 0 L46 8 L58 1 L70 8 L76 12 L66 17 L50 13 L36 19 Z" fill="#f2f2f2" />
        <path d="M30 9 L40 14 L36 5 Z M52 5 L64 14 L58 17 Z M68 8 L74 13 L66 12 Z" fill="#4e4e4e" />
        <path d="M38 9 L47 9 L43 13 Z" fill="#3eb7dc" />
        <path d="M55 9 L62 7 L60 13 Z" fill="#c0552c" />
        <path d="M32 22 Q40 30 38 50 M62 24 Q56 40 64 60 M42 62 Q50 70 58 66" stroke="#fafafa" strokeWidth="5" fill="none" opacity="0.300" />
      </>
    ),
  },
];

const DockSlot = ({ item }: { item: DockItem }) => (
  <div className="flex w-[99.730px] shrink-0 flex-col items-center pt-[14px]">
    <svg viewBox="0 0 100 90" className="h-[90px] w-[100px] overflow-visible drop-shadow-sm" aria-label={item.name}>
      {item.art}
    </svg>
    {item.running && <span className="mt-2 size-2 rounded-full bg-black" />}
  </div>
);

const Gradient = ({ id, from, to }: { id: string; from: string; to: string }) => (
  <linearGradient id={id} x1="0" x2="0" y1="0" y2="1">
    <stop offset="0" stopColor={from} />
    <stop offset="1" stopColor={to} />
  </linearGradient>
);

const Dock = () => (
  <div className="flex h-[124px] w-[2400px] rounded-t-[10px] bg-linear-to-r from-[#6d5b57] via-[#6a5a59] to-[#645453] pl-[9px]">
    <svg className="absolute size-0">
      <defs>
        <Gradient id="finder" from="#2fd0fb" to="#2470f3" />
        <Gradient id="silver" from="#d3e0e5" to="#7c7f80" />
        <Gradient id="safari" from="#27b4f5" to="#1a63e6" />
        <Gradient id="sky" from="#3a8fe0" to="#a6d3f3" />
        <Gradient id="green" from="#4df07b" to="#12c936" />
        <linearGradient id="ring" x1="0.7" x2="0.5" y1="0" y2="1">
          <stop offset="0" stopColor="#fb5c5c" />
          <stop offset="0.5" stopColor="#c86be0" />
          <stop offset="1" stopColor="#3ab4f8" />
        </linearGradient>
        <Gradient id="note" from="#fb4c5c" to="#6b7cf8" />
        <Gradient id="store" from="#26bdf9" to="#1f65ee" />
        <Gradient id="folder" from="#6ecbf5" to="#8bd6f8" />
        <Gradient id="bin" from="#cfcfcf" to="#ececec" />
      </defs>
    </svg>
    {APPS.map((a) => (
      <DockSlot key={a.name} item={a} />
    ))}
    <span className="mt-8 mr-[20px] ml-[22px] h-[60px] w-[2px] shrink-0 bg-[#3c2f2e]" />
    {RUNNING.map((a) => (
      <DockSlot key={a.name} item={a} />
    ))}
    <span className="mt-4 mr-[20px] ml-[22px] h-[92px] w-[2px] shrink-0 bg-[#3c2f2e]" />
    {STACKS.map((a) => (
      <DockSlot key={a.name} item={a} />
    ))}
  </div>
);

export default function App() {
  return (
    <div className="h-[1600px] w-[2560px] overflow-hidden bg-[#1d1312] font-[Inter,'Noto_Sans_CJK_SC',sans-serif]">
      <MenuBar />
      <div className="h-[2px] bg-[#242230]" />
      <div className="h-[1418px] overflow-hidden rounded-[10px]">
        <TabStrip />
        <Toolbar />
        <Bookmarks />
        <WebPage />
        <div className="h-[30px] border-t-[3px] border-[#e3e3e3] bg-linear-to-b from-[#f4f4f4] to-[#ebebeb] pt-[5px] pl-[6px]">
          <div className="h-4 w-[382px] rounded-full bg-[#b9b9b9]" />
        </div>
      </div>
      <div className="ml-[510px] flex h-3 w-[1918px] rounded-b-[8px] bg-[#bdbdbd]">
        <div className="ml-[274px] h-2 w-[1578px] rounded-b-[8px] border-l-2 border-[#a8a8a8] bg-[#969696]" />
      </div>
      <div className="flex justify-center">
        <Dock />
      </div>
    </div>
  );
}
